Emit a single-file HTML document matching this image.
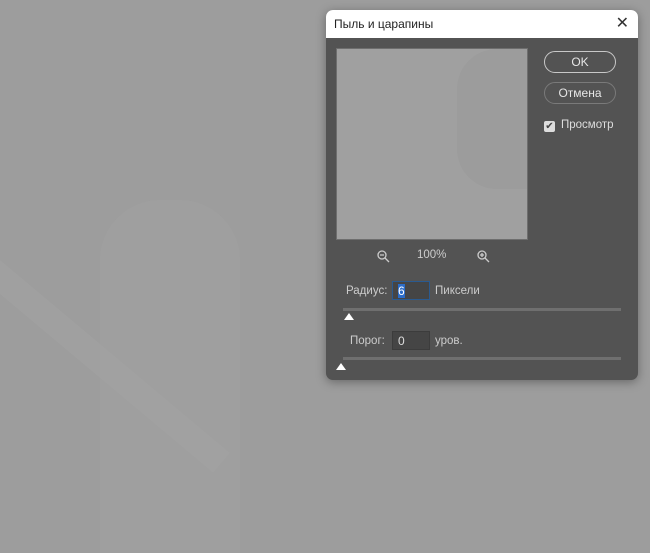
<!DOCTYPE html>
<html><head><style>
body{margin:0;width:650px;height:553px;overflow:hidden;background:#9d9d9d;font-family:"Liberation Sans",sans-serif;position:relative}
.bg1{position:absolute;left:100px;top:200px;width:140px;height:353px;background:#a1a1a1;border-radius:60px 60px 0 0;opacity:.5}
.bg2{position:absolute;left:0;top:260px;width:300px;height:26px;background:#a3a3a3;transform:rotate(40deg);transform-origin:0 0;opacity:.5}
.dlg{position:absolute;left:326px;top:10px;width:312px;height:370px;background:#535353;border-radius:7px;overflow:hidden;box-shadow:0 2px 10px rgba(0,0,0,.35)}
.tb{height:28px;background:#fff;color:#222;font-size:12px;line-height:28px;padding-left:8px;position:relative}
.x{position:absolute;right:9px;top:0;font-size:16px;color:#333}
.pv{position:absolute;left:10px;top:38px;width:190px;height:190px;background:#a0a0a0;border:1px solid #6e6e6e;overflow:hidden}
.btn{position:absolute;left:218px;width:70px;height:20px;border:1.5px solid #c8c8c8;border-radius:11px;color:#e6e6e6;font-size:12px;text-align:center;line-height:20px}
.t{position:absolute;color:#ccc;font-size:11.5px}
.inp{position:absolute;height:19px;width:38px;background:#454545;border:1px solid #3c3c3c;color:#ddd;font-size:12px;line-height:18px;padding-left:5px;box-sizing:border-box}
.tr{position:absolute;left:17px;width:278px;height:3px;background:#6f6f6f}
.th{position:absolute;width:0;height:0;border-left:5px solid transparent;border-right:5px solid transparent;border-bottom:7px solid #fff}
</style></head><body>
<div class="bg1"></div><div class="bg2"></div>
<div class="dlg">
<div class="tb">Пыль и царапины<span class="x">✕</span></div>
<div class="pv"><div style="position:absolute;right:-10px;top:0;width:80px;height:140px;background:#9c9c9c;border-radius:40px 0 0 40px"></div></div>
<div class="btn" style="top:41px">OK</div>
<div class="btn" style="top:72px;border-color:#7a7a7a">Отмена</div>
<div style="position:absolute;left:218px;top:111px;width:11px;height:11px;background:#ddd;border-radius:2px;color:#444;font-size:10px;line-height:11px;text-align:center">✔</div>
<div class="t" style="left:235px;top:109px;color:#ddd">Просмотр</div>
<svg style="position:absolute;left:50px;top:239px" width="14" height="14"><circle cx="6" cy="6" r="4" fill="none" stroke="#ccc" stroke-width="1.3"/><path d="M9 9l4 4M4 6h4" stroke="#ccc" stroke-width="1.3"/></svg>
<div class="t" style="left:91px;top:239px">100%</div>
<svg style="position:absolute;left:150px;top:239px" width="14" height="14"><circle cx="6" cy="6" r="4" fill="none" stroke="#ccc" stroke-width="1.3"/><path d="M9 9l4 4M4 6h4M6 4v4" stroke="#ccc" stroke-width="1.3"/></svg>
<div class="t" style="left:20px;top:275px">Радиус:</div>
<div class="inp" style="left:66px;top:271px;border-color:#2a5a90"><span style="background:#2c6cc8;color:#fff">6</span></div>
<div class="t" style="left:109px;top:275px">Пиксели</div>
<div class="tr" style="top:298px"></div><div class="th" style="left:18px;top:303px"></div>
<div class="t" style="left:24px;top:325px">Порог:</div>
<div class="inp" style="left:66px;top:321px">0</div>
<div class="t" style="left:109px;top:325px">уров.</div>
<div class="tr" style="top:347px"></div><div class="th" style="left:10px;top:353px"></div>
</div>
</body></html>
